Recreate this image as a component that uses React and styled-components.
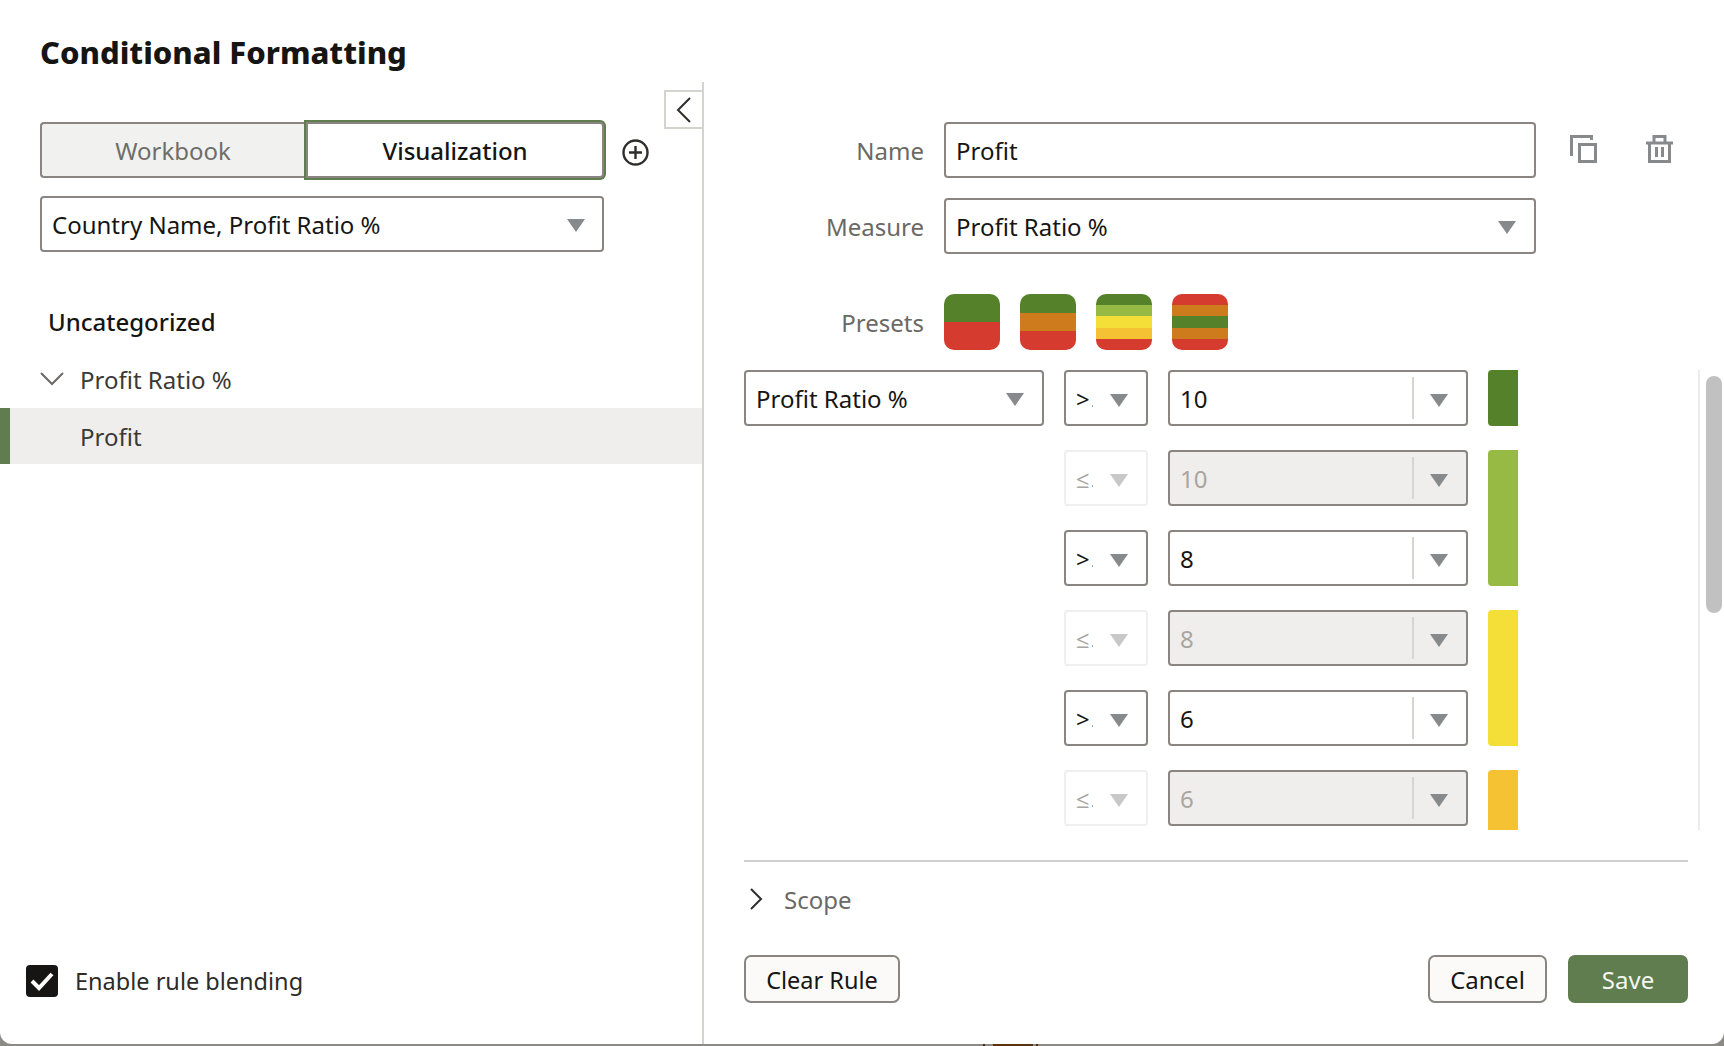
import React from 'react';
import styled, { createGlobalStyle } from 'styled-components';

const colors = {
  ink: '#161513',
  label: '#6b6966',
  border: '#8a8580',
  arrow: '#868a8d',
  accent: '#5f7d4f',
  line: '#d5d3ce',
  muted: '#a9a5a0',
  panel: '#efeeec',
  backdrop: '#8b8a85',
  green: '#55812a',
  lime: '#97ba45',
  yellow: '#f3df37',
  amber: '#f4c233',
  orange: '#ce7b1d',
  red: '#d63b2f'
};

const GlobalStyle = createGlobalStyle`
  html, body {
    margin: 0;
    width: 1724px;
    height: 1046px;
    overflow: hidden;
    background: ${colors.backdrop};
  }
  body {
    font-family: "Noto Sans", "Open Sans", sans-serif;
    color: ${colors.ink};
  }
  * {
    box-sizing: border-box;
  }
`;

const Modal = styled.div`
  width: 1724px;
  height: 1044px;
  display: flex;
  flex-direction: column;
  background: #fff;
  border-radius: 0 0 12px 12px;
`;

const BackdropStrip = styled.div`
  height: 2px;
  background: linear-gradient(
    to right,
    ${colors.backdrop} 983px,
    #4a2a10 983px,
    #4a2a10 985px,
    ${colors.backdrop} 985px,
    ${colors.backdrop} 993px,
    #5a3410 993px,
    #5a3410 1033px,
    ${colors.backdrop} 1033px,
    ${colors.backdrop} 1036px,
    #4a2a10 1036px,
    #4a2a10 1038px,
    ${colors.backdrop} 1038px
  );
`;

const Header = styled.header`
  height: 82px;
  flex: none;
  padding: 29px 0 0 40px;
`;

const Title = styled.h1`
  margin: 0;
  font-size: 31px;
  line-height: 46px;
  font-weight: 800;
`;

const Body = styled.div`
  flex: 1;
  min-height: 0;
  display: flex;
`;

const LeftPanel = styled.section`
  position: relative;
  width: 704px;
  flex: none;
  display: flex;
  flex-direction: column;
  padding: 40px 0 47px;
  border-right: 2px solid ${colors.line};
`;

const CollapseButton = styled.button`
  position: absolute;
  top: 8px;
  right: 0;
  width: 38px;
  height: 39px;
  padding: 0;
  display: flex;
  align-items: center;
  justify-content: center;
  background: #fff;
  border: 2px solid ${colors.line};
  border-right: 0;
`;

const TabRow = styled.div`
  display: flex;
  align-items: center;
  padding-left: 40px;
`;

const Tab = styled.div`
  height: 56px;
  display: flex;
  align-items: center;
  justify-content: center;
  font-size: 24px;
  border: 2px solid ${colors.border};
  ${(p) =>
    p.$active
      ? `
    width: 298px;
    margin-left: 2px;
    background: #fff;
    font-weight: 500;
    color: ${colors.ink};
    border-radius: 0 4px 4px 0;
    box-shadow: 0 0 0 2px ${colors.accent};
  `
      : `
    width: 264px;
    background: #f1f1f0;
    color: #6f6d6a;
    border-right: 0;
    border-radius: 4px 0 0 4px;
  `}
`;

const AddButton = styled.span`
  display: flex;
  margin: 4px 0 0 18px;
`;

const Select = styled.div`
  height: 56px;
  display: flex;
  align-items: center;
  justify-content: space-between;
  padding: 0 ${(p) => p.$arrowInset || 18}px 0 10px;
  font-size: 24px;
  color: ${colors.ink};
  background: #fff;
  border: 2px solid ${colors.border};
  border-radius: 4px;
`;

const ViewSelect = styled(Select)`
  width: 564px;
  margin: 18px 0 0 40px;
`;

const GroupTitle = styled.div`
  margin: 50px 0 0 48px;
  font-size: 24px;
  line-height: 40px;
  font-weight: 500;
`;

const TreeRow = styled.div`
  height: 56px;
  display: flex;
  align-items: center;
  font-size: 24px;
  color: #3a3936;
`;

const MeasureRow = styled(TreeRow)`
  margin-top: 10px;
  padding: 0 0 2px 40px;
  gap: 16px;
`;

const RuleRow = styled(TreeRow)`
  padding-left: 70px;
  background: ${colors.panel};
  border-left: 10px solid ${colors.accent};
`;

const BlendRow = styled.label`
  margin-top: auto;
  display: flex;
  align-items: center;
  gap: 17px;
  padding-left: 26px;
  font-size: 23.5px;
  color: #2c2b29;
`;

const CheckBox = styled.span`
  width: 32px;
  height: 32px;
  display: flex;
  align-items: center;
  justify-content: center;
  background: ${colors.ink};
  border-radius: 4px;
`;

const RightPanel = styled.section`
  flex: 1;
  min-width: 0;
  display: flex;
  flex-direction: column;
  padding: 40px 36px 41px 40px;
`;

const FormGrid = styled.div`
  display: grid;
  grid-template-columns: 180px 592px auto;
  column-gap: 20px;
  row-gap: 20px;
  align-items: center;
  margin-top: ${(p) => p.$top || 0}px;
`;

const FieldLabel = styled.div`
  text-align: right;
  font-size: 24px;
  color: ${colors.label};
`;

const NameInput = styled.div`
  height: 56px;
  display: flex;
  align-items: center;
  padding-left: 10px;
  font-size: 24px;
  background: #fff;
  border: 2px solid ${colors.border};
  border-radius: 4px;
`;

const IconActions = styled.div`
  display: flex;
  gap: 49px;
  margin-top: -2px;
  padding-left: 14px;
`;

const PresetList = styled.div`
  display: flex;
  gap: 20px;
`;

const Preset = styled.div`
  width: 56px;
  height: 56px;
  display: flex;
  flex-direction: column;
  overflow: hidden;
  border-radius: 10px;
`;

const PresetBand = styled.div`
  flex: 1;
  background: ${(p) => p.$color};
`;

const RuleViewport = styled.div`
  height: 460px;
  margin: 20px -36px 0 0;
  flex: none;
  display: flex;
  overflow: hidden;
`;

const RuleGrid = styled.div`
  flex: 1;
  display: grid;
  grid-template-columns: 300px 84px 300px 30px;
  grid-auto-rows: 56px;
  column-gap: 20px;
  row-gap: 24px;
  align-content: start;
`;

const MeasureSelect = styled(Select)`
  grid-column: 1;
`;

const OpSelect = styled.div`
  grid-column: 2;
  display: flex;
  align-items: center;
  justify-content: space-between;
  padding: 0 18px 0 10px;
  font-size: 24px;
  color: ${(p) => (p.$disabled ? colors.muted : colors.ink)};
  background: #fff;
  border: 2px solid ${(p) => (p.$disabled ? '#efefef' : colors.border)};
  border-radius: 4px;
`;

const OpText = styled.span`
  display: flex;
  align-items: flex-end;
  gap: 2px;
`;

const ClippedDot = styled.i`
  width: 1px;
  height: 2px;
  margin-bottom: 8px;
  background: ${colors.muted};
`;

const ValueField = styled.div`
  grid-column: 3;
  position: relative;
  display: flex;
  align-items: center;
  justify-content: space-between;
  padding: 0 18px 0 10px;
  font-size: 24px;
  color: ${(p) => (p.$disabled ? colors.muted : colors.ink)};
  background: ${(p) => (p.$disabled ? colors.panel : '#fff')};
  border: 2px solid ${colors.border};
  border-radius: 4px;
`;

const ValueSplit = styled.span`
  position: absolute;
  top: 5px;
  bottom: 5px;
  right: 52px;
  width: 2px;
  background: #d6d5d2;
`;

const ColorBar = styled.div`
  grid-column: 4;
  grid-row: ${(p) => p.$row} / span ${(p) => p.$span};
  background: ${(p) => p.$color};
  border-radius: 4px 0 0 4px;
`;

const ScrollTrack = styled.div`
  width: 26px;
  flex: none;
  padding: 6px 2px 0 6px;
  border-left: 2px solid #ececec;
`;

const ScrollThumb = styled.div`
  height: 237px;
  background: #c1c1c1;
  border-radius: 8px;
`;

const Divider = styled.div`
  height: 2px;
  flex: none;
  margin-top: 30px;
  background: #cfcfcf;
`;

const ScopeRow = styled.div`
  display: flex;
  align-items: center;
  gap: 21px;
  height: 40px;
  margin-top: 17px;
  padding-left: 6px;
  font-size: 24px;
  color: ${colors.label};
`;

const Footer = styled.footer`
  margin-top: auto;
  display: flex;
  gap: 21px;
`;

const Button = styled.button`
  height: 48px;
  width: ${(p) => p.$width}px;
  padding: 0;
  font-family: inherit;
  font-size: 24px;
  color: ${(p) => (p.$primary ? '#f4f6ef' : colors.ink)};
  background: ${(p) => (p.$primary ? colors.accent : '#fbfaf8')};
  border: 2px solid ${(p) => (p.$primary ? colors.accent : colors.border)};
  border-radius: 7px;
`;

const ClearButton = styled(Button)`
  margin-right: auto;
  padding-top: 2px;
  font-size: 23.5px;
`;

function Arrow({ color = colors.arrow, drop = 3 }) {
  return (
    <svg width="18" height="13" viewBox="0 0 18 13" style={{ marginTop: drop, flex: 'none' }}>
      <path d="M0 0h18L9 13z" fill={color} />
    </svg>
  );
}

function Chevron({ d, width, height, color = '#2f2e2c', strokeWidth = 2 }) {
  return (
    <svg width={width} height={height} viewBox={`0 0 ${width} ${height}`} fill="none">
      <path d={d} stroke={color} strokeWidth={strokeWidth} />
    </svg>
  );
}

function CopyIcon() {
  return (
    <svg width="27" height="28" viewBox="0 0 27 28" fill="none" stroke={colors.arrow} strokeWidth="3">
      <path d="M1.5 21V1.5h20V5" />
      <rect x="9.5" y="9.5" width="16" height="17" />
    </svg>
  );
}

function TrashIcon() {
  return (
    <svg width="27" height="28" viewBox="0 0 27 28" fill="none" stroke={colors.arrow} strokeWidth="3">
      <path d="M0 8h27M8 8V1.5h11V8M3.5 8v18.5h20V8M10.5 12v10M16.5 12v10" />
    </svg>
  );
}

const presets = [
  [colors.green, colors.red],
  [colors.green, colors.orange, colors.red],
  [colors.green, colors.lime, colors.yellow, colors.amber, colors.red],
  [colors.red, colors.orange, colors.green, colors.orange, colors.red]
];

const bars = [
  { row: 1, span: 1, color: colors.green },
  { row: 2, span: 2, color: colors.lime },
  { row: 4, span: 2, color: colors.yellow },
  { row: 6, span: 2, color: colors.amber }
];

const rules = [
  { op: '>', value: '10' },
  { op: '≤', value: '10', disabled: true },
  { op: '>', value: '8' },
  { op: '≤', value: '8', disabled: true },
  { op: '>', value: '6' },
  { op: '≤', value: '6', disabled: true }
];

function App() {
  return (
    <>
      <GlobalStyle />
      <Modal>
        <Header>
          <Title>Conditional Formatting</Title>
        </Header>
        <Body>
          <LeftPanel>
            <CollapseButton aria-label="Collapse">
              <Chevron d="M14 1L2 13l12 12" width="16" height="26" />
            </CollapseButton>
            <TabRow>
              <Tab>Workbook</Tab>
              <Tab $active>Visualization</Tab>
              <AddButton>
                <svg width="27" height="27" viewBox="0 0 27 27" fill="none" stroke="#2f2e2c" strokeWidth="2.4">
                  <circle cx="13.5" cy="13.5" r="12" />
                  <path d="M13.5 7v13M7 13.5h13" />
                </svg>
              </AddButton>
            </TabRow>
            <ViewSelect $arrowInset={17}>
              Country Name, Profit Ratio %
              <Arrow />
            </ViewSelect>
            <GroupTitle>Uncategorized</GroupTitle>
            <MeasureRow>
              <Chevron d="M1 1l11 11L23 1" width="24" height="14" color="#6b6966" />
              Profit Ratio %
            </MeasureRow>
            <RuleRow>Profit</RuleRow>
            <BlendRow>
              <CheckBox>
                <svg width="24" height="20" viewBox="0 0 24 20" fill="none" stroke="#fff" strokeWidth="4">
                  <path d="M2 10l7 7L22 3" />
                </svg>
              </CheckBox>
              Enable rule blending
            </BlendRow>
          </LeftPanel>
          <RightPanel>
            <FormGrid>
              <FieldLabel>Name</FieldLabel>
              <NameInput>Profit</NameInput>
              <IconActions>
                <CopyIcon />
                <TrashIcon />
              </IconActions>
              <FieldLabel>Measure</FieldLabel>
              <Select>
                Profit Ratio %
                <Arrow />
              </Select>
            </FormGrid>
            <FormGrid $top={40}>
              <FieldLabel>Presets</FieldLabel>
              <PresetList>
                {presets.map((bands, i) => (
                  <Preset key={i}>
                    {bands.map((color, j) => (
                      <PresetBand key={j} $color={color} />
                    ))}
                  </Preset>
                ))}
              </PresetList>
            </FormGrid>
            <RuleViewport>
              <RuleGrid>
                <MeasureSelect>
                  Profit Ratio %
                  <Arrow />
                </MeasureSelect>
                {rules.map((rule, i) => (
                  <React.Fragment key={i}>
                    <OpSelect style={{ gridRow: i + 1 }} $disabled={rule.disabled}>
                      <OpText>
                        {rule.op}
                        <ClippedDot />
                      </OpText>
                      <Arrow color={rule.disabled ? '#c8c8c8' : colors.arrow} drop={5} />
                    </OpSelect>
                    <ValueField style={{ gridRow: i + 1 }} $disabled={rule.disabled}>
                      {rule.value}
                      <ValueSplit />
                      <Arrow drop={5} />
                    </ValueField>
                  </React.Fragment>
                ))}
                {bars.map((bar) => (
                  <ColorBar key={bar.row} $row={bar.row} $span={bar.span} $color={bar.color} />
                ))}
              </RuleGrid>
              <ScrollTrack>
                <ScrollThumb />
              </ScrollTrack>
            </RuleViewport>
            <Divider />
            <ScopeRow>
              <Chevron d="M1 1l10 10L1 21" width="13" height="22" />
              Scope
            </ScopeRow>
            <Footer>
              <ClearButton $width={156}>Clear Rule</ClearButton>
              <Button $width={119}>Cancel</Button>
              <Button $width={120} $primary>
                Save
              </Button>
            </Footer>
          </RightPanel>
        </Body>
      </Modal>
      <BackdropStrip />
    </>
  );
}

export default App;
